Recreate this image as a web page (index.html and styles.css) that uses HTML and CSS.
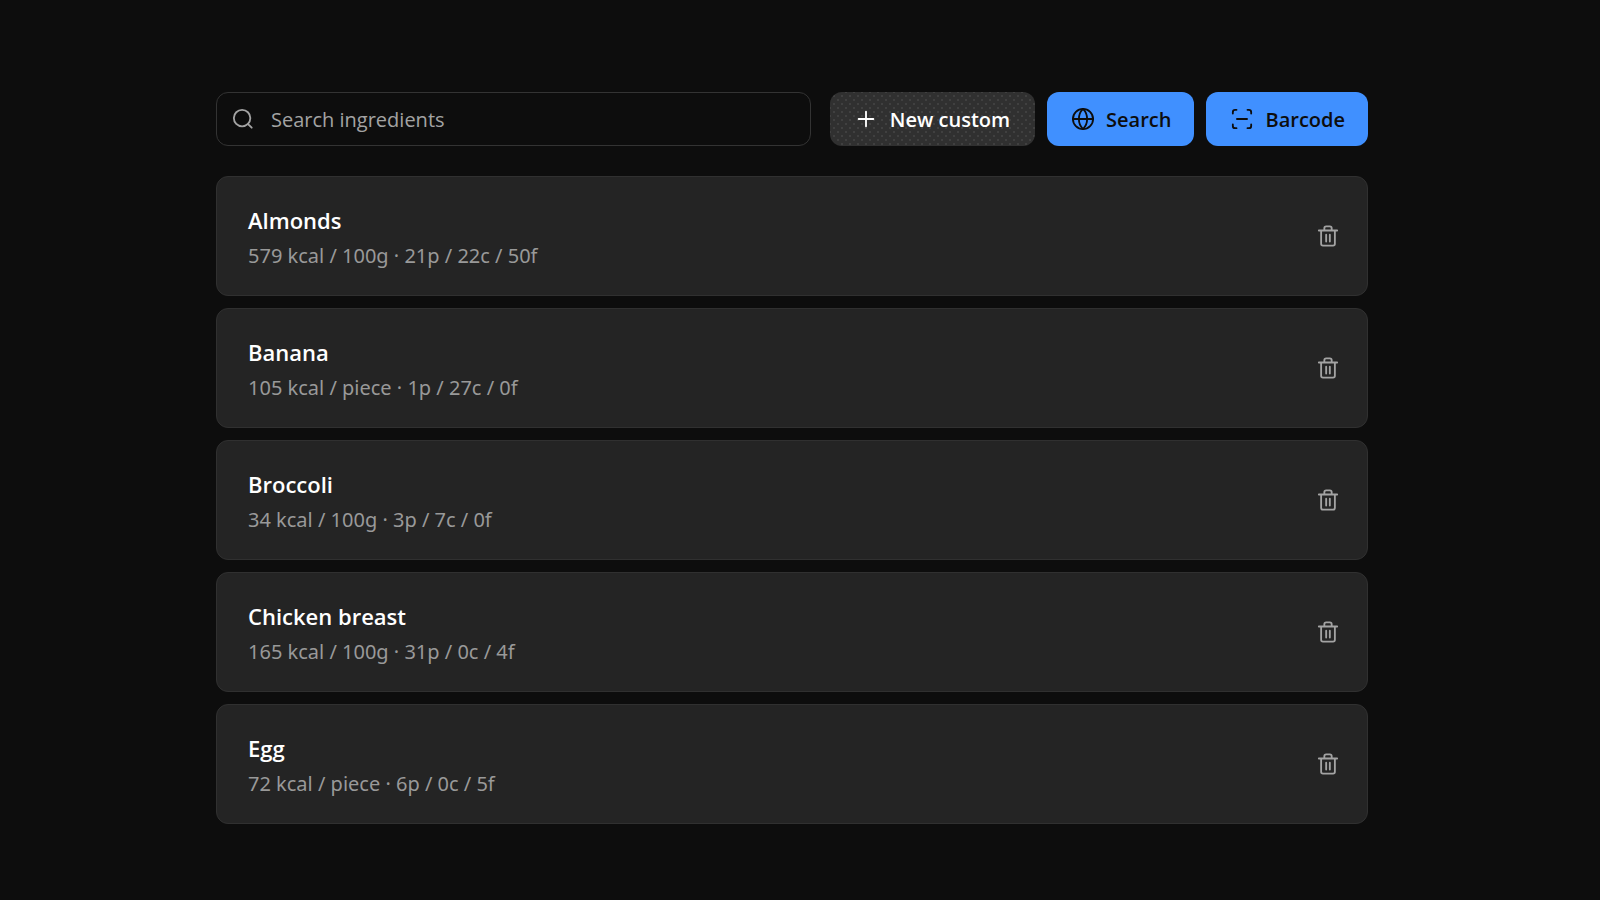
FILE: index.html
```html
<!DOCTYPE html>
<html lang="en">
<head>
<meta charset="utf-8">
<title>Ingredients</title>
<link rel="stylesheet" href="styles.css">
</head>
<body>
<svg class="sprite" aria-hidden="true">
  <symbol id="trash" viewBox="0 0 24 24"><path d="M2 6h20M4.500 6v14.500a2 2 0 0 0 2 2h11a2 2 0 0 0 2-2V6M8 5.500V3.500a2 2 0 0 1 2-2h4a2 2 0 0 1 2 2v2M10 10.500v7.500M14 10.500v7.500"/></symbol>
</svg>
<main class="page">
  <div class="toolbar">
    <div class="search">
      <svg class="icon" viewBox="0 0 24 24" aria-hidden="true"><circle cx="11" cy="11" r="9"/><path d="m21.500 21.500-4-4"/></svg>
      <input class="search-input" type="text" placeholder="Search ingredients" aria-label="Search ingredients">
    </div>
    <div class="actions">
      <button class="button secondary" type="button"><svg class="icon" viewBox="0 0 24 24" aria-hidden="true"><path d="M4 12h16M12 4v16"/></svg>New custom</button>
      <button class="button primary" type="button"><svg class="icon" viewBox="0 0 24 24" aria-hidden="true"><circle cx="12" cy="12" r="11"/><path d="M1 12h22M12 1c-6 6-6 16 0 22 6-6 6-16 0-22"/></svg>Search</button>
      <button class="button primary" type="button"><svg class="icon" viewBox="0 0 24 24" aria-hidden="true"><path d="M2 6V4.500A2.500 2.500 0 0 1 4.500 2H6M18 2h1.500A2.500 2.500 0 0 1 22 4.500V6M22 18v1.500a2.500 2.500 0 0 1-2.500 2.500H18M6 22H4.500A2.500 2.500 0 0 1 2 19.500V18M6.500 12h11"/></svg>Barcode</button>
    </div>
  </div>
  <ul class="list">
    <li class="card"><div class="info"><h2 class="name">Almonds</h2><p class="meta">579 kcal / 100g · 21p / 22c / 50f</p></div><button class="delete" type="button" aria-label="Delete Almonds"><svg class="icon"><use href="#trash"/></svg></button></li>
    <li class="card"><div class="info"><h2 class="name">Banana</h2><p class="meta">105 kcal / piece · 1p / 27c / 0f</p></div><button class="delete" type="button" aria-label="Delete Banana"><svg class="icon"><use href="#trash"/></svg></button></li>
    <li class="card"><div class="info"><h2 class="name">Broccoli</h2><p class="meta">34 kcal / 100g · 3p / 7c / 0f</p></div><button class="delete" type="button" aria-label="Delete Broccoli"><svg class="icon"><use href="#trash"/></svg></button></li>
    <li class="card"><div class="info"><h2 class="name">Chicken breast</h2><p class="meta">165 kcal / 100g · 31p / 0c / 4f</p></div><button class="delete" type="button" aria-label="Delete Chicken breast"><svg class="icon"><use href="#trash"/></svg></button></li>
    <li class="card"><div class="info"><h2 class="name">Egg</h2><p class="meta">72 kcal / piece · 6p / 0c / 5f</p></div><button class="delete" type="button" aria-label="Delete Egg"><svg class="icon"><use href="#trash"/></svg></button></li>
  </ul>
</main>
</body>
</html>
```
FILE: styles.css
```css
* { box-sizing: border-box; }
body {
  margin: 0;
  padding: 92px 232px 76px 216px;
  background: #0d0d0d;
  color: #fff;
  font-family: "Segoe UI", "Open Sans", "Noto Sans", sans-serif;
  font-size: 20px;
}
.sprite { display: none; }
.page { display: flex; flex-direction: column; gap: 30px; }
.toolbar { display: flex; gap: 19px; }
.search {
  flex: 1;
  display: flex;
  align-items: center;
  gap: 17px;
  height: 54px;
  padding: 0 15px;
  border: 1px solid #333;
  border-radius: 12px;
  color: #a3a3a3;
}
.search-input {
  flex: 1;
  min-width: 0;
  padding: 0;
  border: 0;
  outline: 0;
  background: none;
  color: #fff;
  font: inherit;
}
.search-input::placeholder { color: #a3a3a3; opacity: 1; }
.actions { display: flex; gap: 12px; }
.icon {
  flex: none;
  width: 22px;
  height: 22px;
  fill: none;
  stroke: currentColor;
  stroke-width: 2;
  stroke-linecap: round;
  stroke-linejoin: round;
  overflow: visible;
}
.button {
  display: flex;
  align-items: center;
  justify-content: center;
  gap: 12px;
  height: 54px;
  padding: 0 23px 0 25px;
  border: 0;
  border-radius: 12px;
  font: inherit;
  font-weight: 600;
}
.secondary {
  gap: 13px;
  padding: 0 25px;
  background-color: #303030;
  background-image: radial-gradient(circle, #404040 0 1px, transparent 1px), radial-gradient(circle, #404040 0 1px, transparent 1px);
  background-size: 8px 8px;
  background-position: 0 0, 4px 4px;
  color: #fff;
}
.primary { background: #4090ff; color: #0d0d0d; }
.list { display: flex; flex-direction: column; gap: 12px; margin: 0; padding: 0; list-style: none; }
.card {
  display: flex;
  align-items: center;
  justify-content: space-between;
  padding: 21px 28px 21px 31px;
  border: 1px solid #303030;
  border-radius: 12px;
  background: #242424;
}
.info { padding-top: 4px; }
.name, .meta { margin: 0; line-height: 36px; }
.name { font-size: 22px; font-weight: 600; }
.meta { color: #999; font-family: "Segoe UI", "Noto Sans", sans-serif; }
.delete { display: flex; padding: 0; border: 0; background: none; color: #a3a3a3; }
```
